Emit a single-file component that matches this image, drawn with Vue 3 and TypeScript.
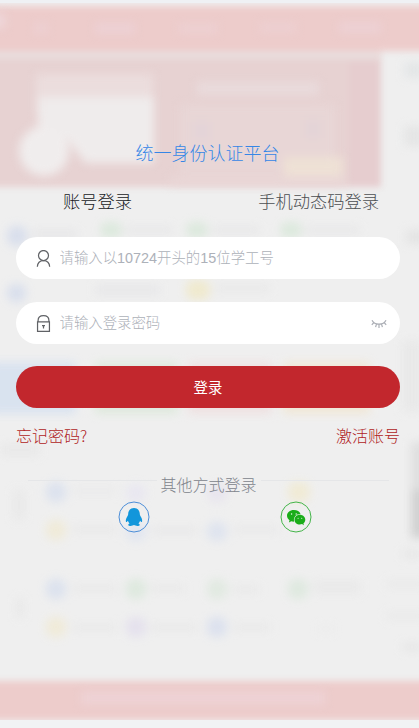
<script setup lang="ts">
import { ref } from 'vue'

interface Blob {
  x: number
  y: number
  w: number
  h: number
  c: string
}

const username = ref('')
const password = ref('')
const mode = ref<'account' | 'sms'>('account')

const dots: Blob[] = [
  { x: 7, y: 226, w: 20, h: 20, c: '#d5dcec' },
  { x: 100, y: 222, w: 22, h: 16, c: '#d9e8da' },
  { x: 186, y: 222, w: 22, h: 16, c: '#d9e8da' },
  { x: 280, y: 222, w: 22, h: 16, c: '#d9e8da' },
  { x: 7, y: 284, w: 19, h: 18, c: '#d5dcec' },
  { x: 186, y: 280, w: 24, h: 20, c: '#f0e9c9' },
  { x: 46, y: 482, w: 20, h: 20, c: '#d9e0ee' },
  { x: 126, y: 484, w: 20, h: 18, c: '#e8e6f1' },
  { x: 207, y: 484, w: 20, h: 18, c: '#e7e3ee' },
  { x: 288, y: 482, w: 22, h: 20, c: '#f1ead1' },
  { x: 46, y: 520, w: 20, h: 20, c: '#f0ead5' },
  { x: 126, y: 522, w: 20, h: 19, c: '#dfe4f0' },
  { x: 207, y: 522, w: 20, h: 19, c: '#dce2ef' },
  { x: 46, y: 579, w: 20, h: 20, c: '#d9e0ee' },
  { x: 126, y: 579, w: 20, h: 20, c: '#dbe8dc' },
  { x: 207, y: 579, w: 20, h: 20, c: '#dfe9df' },
  { x: 288, y: 579, w: 20, h: 20, c: '#dce8dd' },
  { x: 46, y: 617, w: 20, h: 20, c: '#f0ead5' },
  { x: 126, y: 617, w: 20, h: 20, c: '#e3dfed' },
  { x: 207, y: 617, w: 20, h: 20, c: '#d9dfee' },
]

const lines: Blob[] = [
  { x: 32, y: 230, w: 46, h: 8, c: '#e5e5e7' },
  { x: 125, y: 226, w: 48, h: 8, c: '#e7e7e8' },
  { x: 212, y: 226, w: 48, h: 8, c: '#e7e7e8' },
  { x: 305, y: 226, w: 55, h: 8, c: '#e7e7e8' },
  { x: 95, y: 284, w: 65, h: 12, c: '#e7e7e9' },
  { x: 215, y: 284, w: 55, h: 8, c: '#e8e8e8' },
  { x: 0, y: 444, w: 40, h: 12, c: '#e8e8e8' },
  { x: 72, y: 488, w: 46, h: 6, c: '#e9e9ea' },
  { x: 72, y: 526, w: 46, h: 7, c: '#e8e8e8' },
  { x: 152, y: 527, w: 46, h: 7, c: '#e7e7e8' },
  { x: 233, y: 526, w: 46, h: 7, c: '#e8e8e9' },
  { x: 72, y: 585, w: 46, h: 7, c: '#e8e8e8' },
  { x: 150, y: 585, w: 35, h: 7, c: '#e8e8e8' },
  { x: 232, y: 586, w: 28, h: 7, c: '#e8e8e8' },
  { x: 313, y: 580, w: 48, h: 14, c: '#e9e9e9' },
  { x: 72, y: 624, w: 46, h: 7, c: '#e8e8e8' },
  { x: 150, y: 624, w: 48, h: 7, c: '#e8e8e8' },
  { x: 233, y: 624, w: 38, h: 7, c: '#e8e8e8' },
  { x: 318, y: 626, w: 16, h: 6, c: '#ebebeb' },
  { x: 13, y: 490, w: 12, h: 30, c: '#e8e8e8' },
  { x: 16, y: 598, w: 8, h: 20, c: '#e8e8e8' },
  { x: 404, y: 62, w: 20, h: 16, c: '#e2e5e6' },
  { x: 404, y: 126, w: 20, h: 20, c: '#e3e4e4' },
  { x: 406, y: 230, w: 20, h: 14, c: '#e2e2e2' },
  { x: 402, y: 340, w: 20, h: 72, c: '#e8e8e8' },
  { x: 411, y: 442, w: 20, h: 48, c: '#dcdcdc' },
  { x: 411, y: 490, w: 20, h: 48, c: '#cccccc' },
  { x: 402, y: 550, w: 20, h: 8, c: '#e6e6e6' },
  { x: 386, y: 580, w: 40, h: 8, c: '#e9e9e9' },
  { x: 386, y: 612, w: 40, h: 8, c: '#e9e9e9' },
  { x: 402, y: 643, w: 20, h: 8, c: '#e5e5e5' },
]

const cards: Blob[] = [
  { x: -10, y: 362, w: 86, h: 52, c: '#d6e1f0' },
  { x: 95, y: 362, w: 83, h: 52, c: '#dce8da' },
  { x: 188, y: 362, w: 84, h: 52, c: '#efdfdf' },
  { x: 283, y: 362, w: 87, h: 52, c: '#f1e6d3' },
]

const menu: Blob[] = [
  { x: -8, y: 14, w: 13, h: 14, c: '#eed7db' },
  { x: 34, y: 24, w: 14, h: 8, c: '#edd1d4' },
  { x: 95, y: 24, w: 40, h: 9, c: '#edd2d6' },
  { x: 179, y: 25, w: 38, h: 7, c: '#edd2d5' },
  { x: 260, y: 24, w: 36, h: 7, c: '#edd1d4' },
  { x: 339, y: 23, w: 42, h: 9, c: '#edd2d6' },
  { x: 81, y: 692, w: 244, h: 12, c: '#eed3d6' },
]
</script>

<template>
  <div class="page">
    <svg class="backdrop" viewBox="0 0 419 728" aria-hidden="true">
      <defs>
        <filter id="soft" filterUnits="userSpaceOnUse" x="-40" y="-40" width="500" height="810" color-interpolation-filters="sRGB">
          <feGaussianBlur stdDeviation="4.6" />
        </filter>
        <filter id="edge" filterUnits="userSpaceOnUse" x="-40" y="-40" width="500" height="810" color-interpolation-filters="sRGB">
          <feGaussianBlur stdDeviation="3" />
        </filter>
      </defs>
      <rect width="419" height="728" fill="#efefef" />
      <g filter="url(#edge)">
        <rect x="-20" y="50" width="402" height="10" fill="#e9dddd" />
        <rect x="-20" y="59" width="401" height="128" fill="#e7d2d2" />
        <rect x="349" y="62" width="31" height="125" fill="#e6cdcf" />
        <rect x="-20" y="6" width="460" height="45" fill="#edcccb" />
        <rect x="-20" y="681" width="460" height="39" fill="#edcccb" />
      </g>
      <rect width="419" height="3" fill="#eff1f4" />
      <rect y="720" width="419" height="8" fill="#f1f3f4" />
      <g filter="url(#soft)">
        <rect x="36" y="74" width="117" height="40" fill="#ebdddd" />
        <path d="M38 97H154V163H85L68 140L38 125Z" fill="#efecec" />
        <rect x="180" y="105" width="155" height="68" fill="#e8d6d6" />
        <rect x="197" y="82" width="122" height="13" fill="#e9dbdc" />
        <rect x="170" y="177" width="175" height="8" fill="#ead8d8" />
        <rect x="193" y="122" width="17" height="18" fill="#e4d4d8" />
        <rect x="306" y="120" width="14" height="18" fill="#e3d4d7" />
        <rect x="284" y="157" width="59" height="19" fill="#eee1d5" />
        <circle cx="44" cy="151" r="25" fill="#f0eded" />
        <rect v-for="(m, i) in menu" :key="'m' + i" :x="m.x" :y="m.y" :width="m.w" :height="m.h" :fill="m.c" />
      </g>
      <g filter="url(#soft)" opacity=".85">
        <rect v-for="(c, i) in cards" :key="'c' + i" :x="c.x" :y="c.y" :width="c.w" :height="c.h" :fill="c.c" />
        <rect v-for="(l, i) in lines" :key="'l' + i" :x="l.x" :y="l.y" :width="l.w" :height="l.h" :fill="l.c" />
        <rect v-for="(d, i) in dots" :key="'d' + i" :x="d.x" :y="d.y" :width="d.w" :height="d.h" rx="8" :fill="d.c" />
      </g>
    </svg>

    <main class="panel">
      <h1 class="title">统一身份认证平台</h1>

      <nav class="tabs">
        <button class="tab" :class="{ active: mode === 'account' }" type="button" @click="mode = 'account'">账号登录</button>
        <button class="tab" :class="{ active: mode === 'sms' }" type="button" @click="mode = 'sms'">手机动态码登录</button>
      </nav>

      <form class="form" @submit.prevent>
        <label class="field">
          <svg class="icon" viewBox="0 0 16 16">
            <circle cx="8" cy="5.2" r="4.7" />
            <path d="M2.2 15.8C2.4 12.2 4.6 9.9 8 9.9S13.6 12.2 13.8 15.8" />
          </svg>
          <input v-model="username" type="text" placeholder="请输入以10724开头的15位学工号" />
        </label>
        <label class="field">
          <svg class="icon" viewBox="0 0 16 16">
            <path d="M2.4 6.5H13.6V15.4H2.4ZM2.9 6.5V5.2C2.9 2.4 5 .6 8 .6S13.1 2.4 13.1 5.2V6.5M8 9.5V12.8M6.6 10H9.4" />
          </svg>
          <input v-model="password" type="password" placeholder="请输入登录密码" />
          <svg class="eye" viewBox="0 0 16 10">
            <path d="M1 1.2C3.5 6.4 12.5 6.4 15 1.2M2.9 3.5L.8 5.8M5.5 5L4.6 8.2M8 5.4V9M10.5 5L11.4 8.2M13.1 3.5L15.2 5.8" />
          </svg>
        </label>
        <button class="submit" type="submit">登录</button>
      </form>

      <div class="links">
        <a>忘记密码?</a>
        <a>激活账号</a>
      </div>

      <div class="divider"><span>其他方式登录</span></div>

      <div class="social">
        <svg class="brand" viewBox="0 0 32 32">
          <circle cx="16" cy="16" r="15" fill="none" stroke="#4c8ed8" />
          <path
            fill="#1296db"
            d="M16 7C12.3 7 10.2 9.7 10.2 13C10.2 14.2 9.6 15 9 16C7.8 18.1 7.4 20.4 8.2 21C8.7 21.3 9.5 20.3 9.9 19.7C10.2 20.9 10.8 21.8 11.6 22.6C10.6 23 10.1 23.6 10.3 24.2C10.8 25.3 14.8 25 16 24.1C17.2 25 21.2 25.3 21.7 24.2C21.9 23.6 21.4 23 20.4 22.6C21.2 21.8 21.8 20.9 22.1 19.7C22.5 20.3 23.3 21.3 23.8 21C24.6 20.4 24.2 18.1 23 16C22.4 15 21.8 14.2 21.8 13C21.8 9.7 19.7 7 16 7Z"
          />
        </svg>
        <svg class="brand" viewBox="0 0 32 32">
          <circle cx="16" cy="16" r="15" fill="none" stroke="#43b549" />
          <g fill="#1aad19">
            <path d="M13.8 9C9.9 9 7 11.5 7 14.8C7 16.7 8 18.2 9.5 19.3L8.9 21.4L11.3 20.2C12.3 20.6 13.3 20.7 14.2 20.6C13 16.5 16 13 20.5 13C19.8 10.6 17.2 9 13.8 9Z" />
            <path d="M19.8 13.8C16.7 13.8 14.5 16 14.5 18.7C14.5 21.4 16.8 23.5 19.8 23.5C20.6 23.5 21.3 23.4 22 23.1L24 24.2L23.4 22.4C24.6 21.5 25.3 20.2 25.3 18.7C25.3 16 22.9 13.8 19.8 13.8Z" />
          </g>
          <g fill="#eef5ed">
            <circle cx="11.6" cy="13" r=".7" />
            <circle cx="16.2" cy="13" r=".7" />
            <circle cx="18.1" cy="17.2" r=".55" />
            <circle cx="21.7" cy="17.2" r=".55" />
          </g>
        </svg>
      </div>
    </main>
  </div>
</template>

<style>
body {
  overflow: hidden;
}
</style>

<style scoped>
.page {
  position: relative;
  height: 728px;
  overflow: hidden;
  font-family: 'Liberation Sans', 'Noto Sans CJK SC', sans-serif;
  font-weight: 300;
}

.backdrop {
  position: absolute;
  inset: 0;
  width: 100%;
  height: 100%;
}

.panel {
  position: relative;
  display: flex;
  flex-direction: column;
  padding: 140px 19px 0 16px;
}

.title {
  margin: 0;
  padding-right: 1px;
  text-align: center;
  font-size: 18px;
  line-height: 28px;
  font-weight: 300;
  color: #3586e6;
}

.tabs {
  display: flex;
  justify-content: space-between;
  margin-top: 20px;
  padding: 0 21px 0 47px;
}

.tab {
  padding: 0;
  border: 0;
  background: none;
  font: inherit;
  font-size: 17.28px;
  line-height: 28px;
  color: #4c4e52;
}

.tab.active {
  color: #16181c;
}

.form {
  display: flex;
  flex-direction: column;
  gap: 23px;
  margin-top: 21px;
}

.field {
  display: flex;
  align-items: center;
  box-sizing: border-box;
  height: 42px;
  padding: 0 13px 0 19px;
  border-radius: 21px;
  background: #fff;
}

.icon {
  width: 17px;
  height: 17px;
  margin-right: 7.5px;
  fill: none;
  stroke: #606266;
  stroke-width: 1.15;
}

.field input {
  flex: 1;
  min-width: 0;
  padding: 0;
  border: 0;
  outline: 0;
  background: none;
  font: inherit;
  font-size: 14.4px;
  line-height: 24px;
}

.field input::placeholder {
  color: #adb1b9;
}

.eye {
  width: 16px;
  height: 10px;
  margin-top: 2px;
  fill: none;
  stroke: #abaeb5;
  stroke-width: 1.2;
}

.submit {
  height: 42px;
  margin-top: -1px;
  padding: 0 0 2px;
  border: 0;
  border-radius: 21px;
  background: #c2272d;
  font: inherit;
  font-size: 14.4px;
  font-weight: 400;
  color: #fff;
}

.links {
  display: flex;
  justify-content: space-between;
  margin-top: 15px;
  font-family: 'Noto Sans CJK SC', sans-serif;
  font-size: 16px;
  line-height: 24px;
  color: #b01c24;
}

.divider {
  display: flex;
  justify-content: center;
  gap: 4px;
  margin: 27px 11px 0 12px;
  font-size: 16px;
  line-height: 24px;
  color: #80848c;
}

.divider::before,
.divider::after {
  content: '';
  flex: 1;
  height: 1px;
  margin-top: 6px;
  background: #e5e6e8;
}

.social {
  display: flex;
  justify-content: center;
  gap: 130px;
  margin: 3px 0 0 14px;
}

.brand {
  width: 32px;
  height: 32px;
}
</style>
